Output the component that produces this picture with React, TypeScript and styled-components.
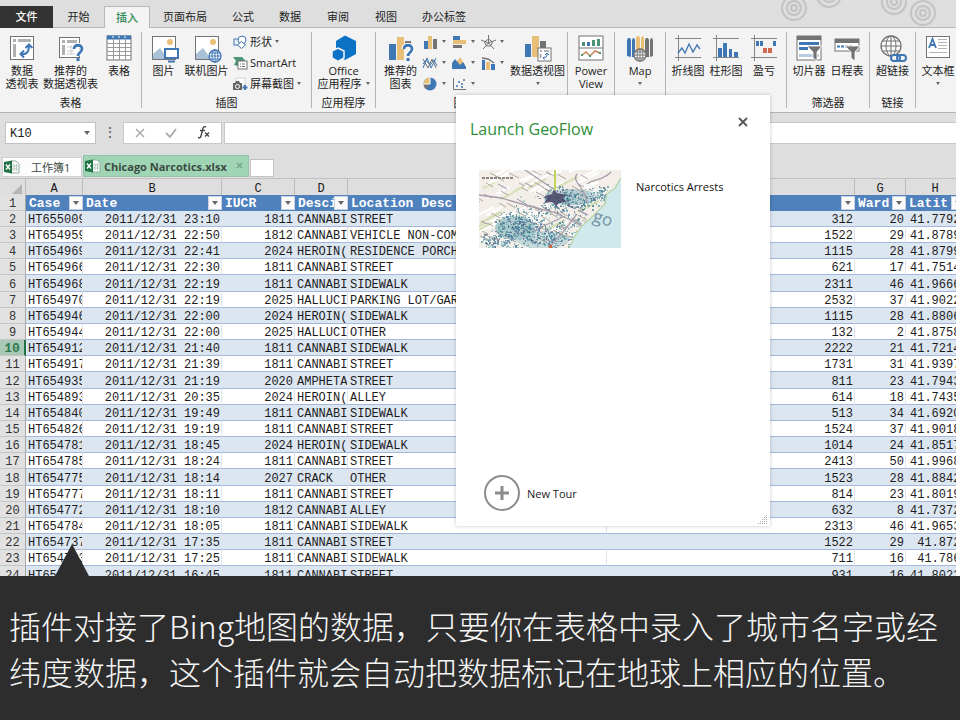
import React from "react";
import styled, { createGlobalStyle } from "styled-components";

const UI_FONT = '"Open Sans", "Noto Sans CJK SC", sans-serif';
const GRID_FONT = '"Liberation Mono", "Noto Sans CJK SC", monospace';

const Blue = "#3f76b4";
const Sand = "#e8bf77";
const Gray = "#737373";

const GlobalStyle = createGlobalStyle`
  * { box-sizing: border-box; }
  body { margin: 0; background: #fff; font-family: ${UI_FONT}; color: #222; }
  button, input { font: inherit; color: inherit; }
  button { border: 0; padding: 0; background: none; }
`;

const Page = styled.div`
  position: relative;
  display: flex;
  flex-direction: column;
  height: 100vh;
  overflow: hidden;
`;

const Workbook = styled.main`
  display: flex;
  flex-direction: column;
  flex: 1;
  min-height: 0;
  margin-right: 4px;
  overflow: hidden;
  background: #dedede;
`;

/* ---------- ribbon tabs ---------- */

const TabStrip = styled.nav`
  position: relative;
  display: flex;
  flex: none;
  height: 28px;
  padding-top: 6px;
  border-bottom: 1px solid #b8b8b8;
`;

const RibbonTab = styled.button<{ $w: number; $kind?: "file" | "active" }>`
  width: ${(p) => p.$w}px;
  height: 22px;
  font-size: 11px;
  line-height: 20px;
  white-space: nowrap;
  color: ${(p) => (p.$kind === "file" ? "#fff" : p.$kind === "active" ? "#2f8a57" : "#222")};
  font-weight: ${(p) => (p.$kind ? 500 : 400)};
  background: ${(p) => (p.$kind === "file" ? "#333" : p.$kind === "active" ? "#f3f3f3" : "none")};
  border: ${(p) => (p.$kind === "active" ? "1px solid #b8b8b8" : "0")};
  border-bottom: 0;
`;

const Backdrop = styled.svg`
  position: absolute;
  top: 0;
  right: 0;
  pointer-events: none;
`;

/* ---------- ribbon ---------- */

const RibbonBar = styled.section`
  display: flex;
  flex: none;
  height: 85px;
  padding: 4px 0;
  overflow: hidden;
  background: #f3f3f3;
  border-bottom: 1px solid #b3b3b3;
`;

const Group = styled.div<{ $w: number; $last?: boolean }>`
  display: flex;
  flex-direction: column;
  flex: 0 0 ${(p) => p.$w}px;
  border-right: ${(p) => (p.$last ? "0" : "1px solid #b5b5b5")};
`;

const GroupBody = styled.div`
  display: flex;
  flex: 1;
  min-height: 0;
  justify-content: center;
`;

const GroupLabel = styled.div<{ $launcher?: boolean }>`
  height: 12px;
  padding-right: ${(p) => (p.$launcher ? 14 : 0)}px;
  font-size: 11px;
  line-height: 14px;
  text-align: center;
`;

const BigButton = styled.button<{ $w: number }>`
  display: flex;
  flex-direction: column;
  align-items: center;
  width: ${(p) => p.$w}px;
  padding-top: 2px;
  font-size: 11px;
  line-height: 13px;
  white-space: nowrap;
`;

const BigLabel = styled.span`
  display: flex;
  flex-direction: column;
  align-items: center;
  margin-top: 2px;
`;

const LabelLine = styled.span`
  display: flex;
  align-items: center;
  gap: 4px;
  min-height: 13px;
`;

const Arrow = styled.span<{ $size?: number }>`
  width: 0;
  height: 0;
  flex: none;
  border: ${(p) => p.$size ?? 2}px solid transparent;
  border-top: ${(p) => (p.$size ?? 2) + 1}px solid #666;
  border-bottom: 0;
`;

const SmallColumn = styled.div`
  display: flex;
  flex-direction: column;
  width: 78px;
  margin-left: 5px;
`;

const SmallButton = styled.button`
  display: flex;
  align-items: center;
  gap: 3px;
  height: 21px;
  padding-bottom: 2px;
  font-size: 11px;
  line-height: 14px;
  white-space: nowrap;
`;

const ChartGrid = styled.div`
  display: grid;
  grid-template-columns: repeat(3, 29px);
  grid-auto-rows: 21px;
  width: 88px;
`;

const ChartButton = styled.button`
  display: flex;
  align-items: center;
  gap: 5px;
  padding-bottom: 2px;
`;

/* ---------- formula bar ---------- */

const FormulaRow = styled.section`
  display: flex;
  flex: none;
  height: 43px;
  padding: 9px 0 12px 5px;
`;

const NameBox = styled.div`
  display: flex;
  align-items: center;
  width: 91px;
  padding-right: 5px;
  background: #fff;
  border: 1px solid #c2c2c2;
`;

const NameInput = styled.input`
  flex: 1;
  min-width: 0;
  padding: 2px 4px 0;
  border: 0;
  outline: 0;
  background: none;
  font-family: ${GRID_FONT};
  font-size: 12px;
`;

const Grip = styled.span`
  width: 27px;
  text-align: center;
  font-size: 14px;
  line-height: 20px;
  color: #555;
`;

const FormulaTools = styled.div`
  display: flex;
  align-items: center;
  justify-content: space-around;
  width: 99px;
  background: #fff;
  border: 1px solid #c8c8c8;
`;

const FormulaInput = styled.input`
  flex: 1;
  min-width: 0;
  margin-left: 2px;
  background: #fff;
  border: 1px solid #c8c8c8;
  border-right: 0;
  outline: 0;
`;

/* ---------- workbook tabs ---------- */

const BookTabs = styled.nav`
  display: flex;
  align-items: flex-end;
  flex: none;
  height: 23px;
  padding: 0 0 1px 2px;
  border-bottom: 1px solid #c0c0c0;
`;

const BookTab = styled.button<{ $w: number; $active?: boolean }>`
  display: flex;
  align-items: center;
  gap: ${(p) => (p.$active ? 3 : 11)}px;
  width: ${(p) => p.$w}px;
  height: ${(p) => (p.$active ? 22 : 20)}px;
  margin-right: 1px;
  padding: 0 3px 0 1px;
  font-size: 11px;
  font-weight: ${(p) => (p.$active ? 700 : 400)};
  white-space: nowrap;
  color: #3a4a40;
  background: ${(p) => (p.$active ? "#9fd5b4" : "#fdfdfd")};
  border: 1px solid ${(p) => (p.$active ? "#94c4a7" : "#d0d0d0")};
`;

const NewTab = styled.button`
  width: 24px;
  height: 18px;
  background: #fff;
  border: 1px solid #c4c4c4;
`;

/* ---------- sheet ---------- */

const SheetArea = styled.section`
  flex: 1;
  min-height: 0;
  overflow: hidden;
`;

const Sheet = styled.table`
  width: calc(100% + 9px);
  table-layout: fixed;
  border-collapse: separate;
  border-spacing: 0;
  font-family: ${GRID_FONT};
  font-size: 12px;
  line-height: 12px;
  color: #1c1c1c;
`;

const Col = styled.col<{ $w?: number }>`
  width: ${(p) => (p.$w ? `${p.$w}px` : "auto")};
`;

const Letter = styled.th`
  height: 16px;
  padding: 3px 0 0;
  font-weight: 400;
  background: #dedede;
  border-right: 1px solid #bdbdbd;
`;

const RowNumber = styled.th<{ $on?: boolean }>`
  height: 16px;
  padding: 3px 0 0;
  overflow: hidden;
  font-size: ${(p) => (p.$on ? 13 : 12)}px;
  font-weight: ${(p) => (p.$on ? 700 : 400)};
  color: ${(p) => (p.$on ? "#2d7a4d" : "#333")};
  background: ${(p) => (p.$on ? "#a9c8b5" : "#e1e1e1")};
  border-right: ${(p) => (p.$on ? "2px solid #217346" : "1px solid #a6a6a6")};
  border-bottom: 1px solid #c6c6c6;
`;

const FieldHead = styled.th`
  padding: 0;
  overflow: hidden;
  font-size: 13px;
  line-height: 16px;
  text-align: left;
  color: #fff;
  background: #4f81bd;
`;

const FieldInner = styled.div`
  display: flex;
  align-items: center;
  justify-content: space-between;
  height: 16px;
  padding-left: 3px;
`;

const FieldName = styled.span`
  flex: 1;
  min-width: 0;
  padding-top: 1px;
  overflow: hidden;
  white-space: nowrap;
`;

const FilterButton = styled.button`
  display: flex;
  align-items: center;
  justify-content: center;
  flex: none;
  width: 14px;
  height: 14px;
  background: #fafafa;
  border: 1px solid #c9d2de;
`;

const Row = styled.tr<{ $band: boolean }>`
  background: ${(p) => (p.$band ? "#dce6f1" : "#fff")};
  & > * { height: 16px; }
  &:nth-child(6n) > * { height: 17px; }
`;

const Cell = styled.td<{ $right?: boolean; $lat?: boolean }>`
  padding: 3px 1px 0 ${(p) => (p.$lat ? 4 : 2)}px;
  overflow: hidden;
  white-space: pre;
  text-align: ${(p) => (p.$right ? "right" : "left")};
  border-right: 1px solid #dfe5ef;
  border-bottom: 1px solid #a3b8da;
`;

const Corner = styled.svg`
  display: block;
  margin-left: auto;
  margin-right: 3px;
`;

/* ---------- launch dialog ---------- */

const Dialog = styled.section`
  position: absolute;
  top: 95px;
  left: 456px;
  display: flex;
  flex-direction: column;
  width: 314px;
  height: 431px;
  background: #fff;
  box-shadow: 0 0 4px rgba(0, 0, 0, 0.22);
`;

const DialogHead = styled.header`
  display: flex;
  align-items: flex-start;
  justify-content: space-between;
  padding: 21px 21px 0 14px;
`;

const DialogTitle = styled.h2`
  margin: 0;
  font-size: 16px;
  font-weight: 400;
  line-height: 27px;
  color: #2f8f37;
`;

const CloseButton = styled.button`
  height: 12px;
  line-height: 0;
`;

const TourItem = styled.button`
  display: flex;
  align-items: flex-start;
  gap: 15px;
  margin: 27px 0 0 23px;
  font-size: 11px;
  line-height: 34px;
  text-align: left;
  color: #111;
`;

const NewTour = styled.button`
  display: flex;
  align-items: center;
  gap: 7px;
  margin: auto auto 15px 28px;
  font-size: 11px;
  color: #222;
`;

const ResizeGrip = styled.svg`
  position: absolute;
  right: 2px;
  bottom: 2px;
`;

/* ---------- caption ---------- */

const Caption = styled.footer`
  position: relative;
  flex: none;
  padding: 26px 9px;
  background: #2d2d2d;
`;

const CaptionText = styled.p`
  margin: 0;
  font-family: "Noto Sans CJK SC", sans-serif;
  font-size: 32px;
  font-weight: 300;
  line-height: 46px;
  white-space: nowrap;
  color: #f6f6f6;
`;

const Pointer = styled.svg`
  position: absolute;
  left: 55px;
  bottom: 100%;
`;

/* ---------- icons ---------- */

const IconSvg = styled.svg`
  flex: none;
  overflow: visible;
`;

const Svg = ({ w = 28, h = 28, children }: { w?: number; h?: number; children: React.ReactNode }) => (
  <IconSvg width={w} height={h} viewBox={`0 0 ${w} ${h}`} fill="none" aria-hidden="true">
    {children}
  </IconSvg>
);

const PivotIcon = () => (
  <Svg>
    <rect x="2.500" y="2.500" width="23" height="23" fill="#fff" stroke={Gray} />
    <path d="M5 5h3v3H5zM10 5h13v3H10zM5 10h3v13H5z" fill="#b0b0b0" />
    <path d="M13 20c6 1 8-3 8-8M17.500 14l3.500-3.500 3.500 3.500M16 16.500L12.500 20l3.500 3.500" stroke={Blue} strokeWidth="2" />
  </Svg>
);

const QuestionMark = () => (
  <g>
    <path d="M17 15c0-5 8-5 8 0 0 3.500-4 3.500-4 7" stroke="#fff" strokeWidth="5" />
    <path d="M17 15c0-5 8-5 8 0 0 3.500-4 3.500-4 7" stroke={Blue} strokeWidth="2.800" />
    <rect x="19.500" y="24" width="3" height="3" fill={Blue} />
  </g>
);

const RecommendPivotIcon = () => (
  <Svg>
    <rect x="2.500" y="3.500" width="20" height="20" fill="#fff" stroke={Gray} />
    <path d="M5 6h3v3H5zM10 6h10v3H10zM5 11h3v10H5z" fill="#b0b0b0" />
    <path d="M10 13h9M10 17h7M10 20h8M14 11v10" stroke="#ccc" />
    <QuestionMark />
  </Svg>
);

const TableIcon = () => (
  <Svg>
    <rect x="2" y="2" width="24" height="24" fill="#fff" stroke={Gray} />
    <rect x="2" y="1.500" width="24" height="4" fill={Blue} />
    <path d="M2 9.500h24M2 13.500h24M2 17.500h24M2 21.500h24M8.500 5v21M14.500 5v21M20.500 5v21" stroke="#9a9a9a" />
    <path d="M7 3h2M13 3h2M19 3h2" stroke="#fff" />
  </Svg>
);

const PhotoBase = () => (
  <g>
    <rect x="2.500" y="2.500" width="23" height="23" fill="#fff" stroke={Gray} />
    <circle cx="20" cy="8" r="3" fill={Sand} />
    <path d="M3 25V20l7-6 8 11z" fill="#aac0d6" />
  </g>
);

const PictureIcon = () => (
  <Svg>
    <PhotoBase />
    <rect x="15" y="15" width="13" height="9" fill="#fff" stroke={Blue} strokeWidth="2" />
    <path d="M18 27.500h7" stroke={Blue} strokeWidth="2" />
  </Svg>
);

const Globe = ({ cx, cy, r, color, fill = "#fff" }: { cx: number; cy: number; r: number; color: string; fill?: string }) => (
  <g stroke={color}>
    <circle cx={cx} cy={cy} r={r} fill={fill} strokeWidth="1.300" />
    <ellipse cx={cx} cy={cy} rx={r * 0.5} ry={r} />
    <path d={`M${cx - r} ${cy}h${2 * r}M${cx} ${cy - r}v${2 * r}M${cx - r * 0.85} ${cy - r / 2}h${r * 1.7}M${cx - r * 0.85} ${cy + r / 2}h${r * 1.7}`} />
  </g>
);

const OnlinePictureIcon = () => (
  <Svg>
    <PhotoBase />
    <Globe cx={22} cy={22} r={6} color={Blue} />
  </Svg>
);

const ShapesIcon = () => (
  <Svg w={14} h={14}>
    <rect x="1" y="4" width="7" height="6" stroke={Blue} />
    <circle cx="9" cy="5" r="4" fill="#fff" stroke={Blue} />
    <path d="M8.500 6.500l4 3.500-4 3.500-4-3.500z" fill="#fff" stroke={Blue} />
  </Svg>
);

const SmartArtIcon = () => (
  <Svg w={14} h={14}>
    <path d="M0 1h9l3 3-2 3H5v3l-4-1 2-4z" fill="#4c9473" />
    <rect x="5" y="5" width="9" height="8" fill="#fff" stroke={Gray} />
    <path d="M7 8h1M7 10.500h1M9 8h3M9 10.500h3" stroke={Gray} />
  </Svg>
);

const ScreenshotIcon = () => (
  <Svg w={14} h={14}>
    <path d="M3 1h9v8H3z" fill="#fff" stroke="#d2d2d2" />
    <path d="M0 6h2l1-2h3l1 2h2v7H0z" fill="#666" />
    <circle cx="4.500" cy="9.500" r="2" fill="#666" stroke="#fff" />
    <path d="M12 8v5M9.500 10.500h5" stroke={Blue} strokeWidth="2" />
  </Svg>
);

const OfficeIcon = () => (
  <Svg>
    <path d="M15 1.500l11 5.500v13l-11 6-9-5V7z" fill="#0c72c6" />
    <path d="M8 14l6 3v7l-6 3.500L2 24v-7z" fill="#0c72c6" stroke="#f3f3f3" strokeWidth="1.500" />
  </Svg>
);

const RecommendChartIcon = () => (
  <Svg>
    <rect x="2" y="10" width="7" height="16" fill={Blue} />
    <rect x="10" y="3" width="7" height="23" fill={Sand} />
    <rect x="18" y="7" width="6" height="4" fill={Gray} />
    <QuestionMark />
  </Svg>
);

const PivotChartIcon = () => (
  <Svg>
    <rect x="1" y="10" width="6" height="13" fill={Blue} />
    <rect x="8" y="2" width="7" height="21" fill={Sand} />
    <rect x="16" y="7" width="6" height="8" fill={Gray} />
    <rect x="14" y="14" width="13" height="13" fill="#fff" stroke={Gray} />
    <path d="M16 17h2M20 17h5M16.500 20v4" stroke="#999" strokeWidth="1.500" />
    <path d="M19 24c3 0 4-1 4-4M21 21l2-2 2 2M20.500 22.500L19 24l1.500 1.500" stroke={Blue} />
  </Svg>
);

const ColumnGlyph = () => (
  <Svg w={14} h={14}>
    <path d="M1 6h4v8H1z" fill={Blue} />
    <path d="M5 1h4v13H5z" fill={Sand} />
    <path d="M10 4h4v10h-4z" fill={Gray} />
  </Svg>
);
const BarGlyph = () => (
  <Svg w={14} h={14}>
    <path d="M1 1h7v4H1z" fill={Blue} />
    <path d="M1 5h13v4H1z" fill={Sand} />
    <path d="M1 10h9v3H1z" fill={Gray} />
  </Svg>
);
const RadarGlyph = () => (
  <Svg w={14} h={14}>
    <path d="M7.500 0v8M0 5l7.500 3L15 5M2 14l5.500-6L13 14M7.500 4l4 3-2 4h-4l-2-4z" stroke={Gray} />
  </Svg>
);
const LineGlyph = () => (
  <Svg w={14} h={14}>
    <path d="M0 12L4 2l4 10 5-10" stroke={Blue} />
    <path d="M0 3l5 9 4-9 4 9" stroke={Gray} />
    <path d="M0 8l3-4 4 5 4-5 3 6" stroke={Blue} />
  </Svg>
);
const AreaGlyph = () => (
  <Svg w={14} h={14}>
    <path d="M2 10L8 1l5 8z" fill={Sand} />
    <path d="M0 13V7l3-4 5 6 3-3 3 5v2z" fill={Blue} />
  </Svg>
);
const ComboGlyph = () => (
  <Svg w={14} h={14}>
    <path d="M1 4h3v10H1z" fill={Blue} />
    <path d="M5 6h4v8H5z" fill={Sand} />
    <path d="M10 8h4v6h-4z" fill={Blue} />
    <path d="M1 2l6 1 6 4" stroke={Gray} strokeWidth="1.500" />
  </Svg>
);
const PieGlyph = () => (
  <Svg w={14} h={14}>
    <circle cx="7" cy="7" r="6.500" fill={Blue} />
    <path d="M7 7V0.500A6.500 6.500 0 0 0 0.500 7z" fill={Sand} />
    <path d="M7 7H0.500A6.500 6.500 0 0 0 3 12z" fill={Gray} />
    <path d="M7 0v7H0" stroke="#fff" />
  </Svg>
);
const ScatterGlyph = () => (
  <Svg w={14} h={14}>
    <path d="M1.500 1v11.500H14" stroke={Gray} />
    <path d="M4 9h2M6 5h2M9 7h2M11 3h2M9 10h2" stroke={Blue} strokeWidth="1.500" />
  </Svg>
);

const PowerViewIcon = () => (
  <Svg>
    <rect x="2" y="2" width="24" height="24" fill="#fff" stroke={Gray} />
    <path d="M2 14h24" stroke={Gray} />
    <path d="M5 8h3v4H5zM15 6h3v6h-3zM20 5h3v7h-3z" fill="#4c9473" />
    <path d="M10 8h3v4h-3z" fill={Blue} />
    <path d="M5 21l4-3 4 4 5-5 5 2" stroke="#c98552" strokeWidth="1.500" />
    <path d="M4 20h2v2H4zM12 21h2v2h-2zM22 18h2v2h-2z" fill="#4c9473" />
  </Svg>
);

const MapIcon = () => (
  <Svg>
    <path d="M1 6l1-2h2l1 2v17l-4-1z" fill={Blue} />
    <path d="M6 6l1-2h1l1 2v17H6z" fill={Blue} />
    <path d="M10 4l1-2h2l1 2v20h-4z" fill={Sand} />
    <path d="M15 4l1-2h1l1 2v20h-3z" fill={Sand} />
    <path d="M19 6l1-2h2l1 2v17h-4z" fill={Gray} />
    <path d="M24 6l1-2h1l1 2v16l-3 1z" fill={Gray} />
    <Globe cx={14} cy={21} r={6} color={Gray} />
  </Svg>
);

const SparkFrame = () => <path d="M4.500 1v26M1 4.500h26M1 23.500h26" stroke="#858585" />;

const SparkLineIcon = () => (
  <Svg>
    <SparkFrame />
    <path d="M4 19l4-5 3 5 4-9 4 8 4-7 3 4" stroke={Blue} strokeWidth="1.300" />
  </Svg>
);
const SparkColumnIcon = () => (
  <Svg>
    <SparkFrame />
    <path d="M6 14h4v9H6zM11 9h4v14h-4zM17 15h3v8h-3zM22 18h4v5h-4z" fill={Blue} />
  </Svg>
);
const WinLossIcon = () => (
  <Svg>
    <SparkFrame />
    <path d="M6 7h3v5H6zM10 7h3v5h-3zM23 7h3v5h-3z" fill={Blue} />
    <path d="M13 14h4v5h-4zM18 14h4v5h-4z" fill="#cf6a50" />
  </Svg>
);

const Funnel = () => (
  <path d="M12 12h15l-5 6v9l-4-3v-6z" fill={Gray} stroke="#fff" strokeWidth="0.800" />
);
const SlicerIcon = () => (
  <Svg>
    <rect x="2" y="2" width="24" height="24" fill="#fff" stroke={Gray} />
    <rect x="2" y="2" width="24" height="4" fill={Gray} />
    <path d="M4 9.500h20" stroke={Blue} strokeWidth="3" />
    <path d="M4 14.500h9" stroke={Blue} strokeWidth="3" />
    <path d="M4 21.500h20" stroke="#b9cbe0" strokeWidth="3" />
    <Funnel />
  </Svg>
);
const TimelineIcon = () => (
  <Svg>
    <rect x="2" y="5" width="24" height="12" fill="#fff" stroke={Gray} />
    <rect x="2" y="5" width="24" height="4" fill={Gray} />
    <path d="M4 12.500h16" stroke={Blue} strokeWidth="2" strokeDasharray="3 1" />
    <Funnel />
  </Svg>
);
const LinkIcon = () => (
  <Svg>
    <Globe cx={12} cy={12} r={10} color={Gray} fill="#fafafa" />
    <rect x="12" y="21" width="9" height="6" rx="3" fill="#f3f3f3" stroke={Blue} strokeWidth="2" />
    <rect x="18" y="21" width="9" height="6" rx="3" stroke={Blue} strokeWidth="2" />
  </Svg>
);
const TextBoxIcon = () => (
  <Svg>
    <rect x="2.500" y="2.500" width="23" height="21" fill="#fff" stroke={Gray} />
    <path d="M5 14l3.500-9 3.500 9M6 11h5" stroke={Blue} strokeWidth="1.800" />
    <path d="M14 5.500h9M14 8.500h9M14 11.500h9M14 14.500h9M5 18.500h18" stroke="#b4b4b4" />
  </Svg>
);

const BookIcon = () => (
  <Svg w={16} h={16}>
    <path d="M7 2h5l3 3v9H7z" fill="#fff" stroke="#8fae9b" />
    <path d="M10 5v7M12.500 5v7M8 7h6M8 10h6" stroke="#b7cbbd" />
    <path d="M0 3l8-1.500v13L0 13z" fill="#217346" />
    <path d="M2 5.500l4 5M6 5.500l-4 5" stroke="#fff" strokeWidth="1.400" />
  </Svg>
);

/* ---------- map thumbnail ---------- */

const makeRandom = (start: number) => {
  let seed = start;
  return () => {
    seed = (seed * 16807) % 2147483647;
    return seed / 2147483647;
  };
};

const random = makeRandom(4217);
const clusters = [
  { x: 38, y: 58, sx: 30, sy: 20, n: 420 },
  { x: 92, y: 28, sx: 36, sy: 14, n: 240 },
  { x: 122, y: 24, sx: 16, sy: 9, n: 70 },
  { x: 72, y: 66, sx: 34, sy: 16, n: 200 },
  { x: 14, y: 72, sx: 22, sy: 10, n: 90 },
  { x: 78, y: 46, sx: 50, sy: 22, n: 130 },
];
const teals = ["#3d8495", "#5d9ea8", "#86b9bd", "#4f7fa0", "#a9cdd0", "#56658c"];
const specks = clusters.flatMap((c) =>
  Array.from({ length: c.n }, () => ({
    x: Math.round(c.x + (random() + random() - 1) * c.sx),
    y: Math.round(c.y + (random() + random() - 1) * c.sy),
    w: 1 + Math.floor(random() * 2),
    h: 1 + Math.floor(random() * 2),
    fill: teals[Math.floor(random() * teals.length)],
  }))
);
const streets = Array.from({ length: 90 }, () => ({
  x: Math.round(random() * 110 - 6),
  y: Math.round(random() * 70),
  w: 5 + Math.round(random() * 5),
}));
const pale = Array.from({ length: 60 }, () => ({
  x: Math.round(random() * 120 - 10),
  y: Math.round(random() * 76),
  w: 8 + Math.round(random() * 14),
}));
const coast = "M142 8l-6 10-8 6-2 10-14 14-10 9-6 9-6 12";

const MapThumb = () => (
  <svg width="142" height="78" viewBox="0 0 142 78" role="img" aria-label="Narcotics Arrests">
    <rect width="142" height="78" fill="#f3efe8" />
    {pale.map((l, i) => (
      <path key={i} d={`M${l.x} ${l.y}l${l.w} ${-Math.round(l.w / 2)}`} stroke={i % 4 === 0 ? "#d5dfb4" : "#fff"} strokeWidth="2" />
    ))}
    <ellipse cx="36" cy="58" rx="20" ry="12" fill="#6ba5b0" opacity="0.500" />
    <ellipse cx="92" cy="27" rx="26" ry="8" fill="#7fa9b8" opacity="0.500" />
    <ellipse cx="64" cy="70" rx="26" ry="9" fill="#9cc3c9" opacity="0.500" />
    {streets.map((l, i) => (
      <path key={i} d={`M${l.x} ${l.y}l${l.w} ${Math.round(l.w / 2)}`} stroke={i % 5 === 0 ? "#8f86a0" : "#a59f98"} strokeWidth="0.900" />
    ))}
    {specks.map((s, i) => (
      <rect key={i} x={s.x} y={s.y} width={s.w} height={s.h} fill={s.fill} opacity="0.750" />
    ))}
    <path d="M0 25l22 3 28 8 24 6 22 10 8 4M70 78l14-16 14-18M46 0l30 20M98 4c-6 8 8 12 10 28M108 14c8-6 14-2 24-12M52 62l34-16" stroke="#a79cab" strokeWidth="1.300" fill="none" />
    <path d={`${coast}h56z`} fill="#cfe9ec" />
    <path d={coast} stroke="#bcd6b0" strokeWidth="1.500" fill="none" />
    <path d="M64 27l9-3 2-5 3 4 10 2-4 3 4 4-8 1-3 3-4-4-8 1 3-4z" fill="#454465" opacity="0.850" />
    <path d="M76 0v20" stroke="#bed35c" strokeWidth="2" />
    <path d="M3 8h32" stroke="#8b8583" strokeWidth="2" strokeDasharray="3 1" />
    <rect x="70" y="75" width="3" height="3" fill="#d0643f" />
    <text x="113" y="51" fontSize="17" fontFamily="Open Sans, sans-serif" fill="#7794a5" transform="rotate(18 113 51)">go</text>
  </svg>
);

/* ---------- data ---------- */

type Rec = [string, string, number, string, string, number, number, string];

const records: Rec[] = [
  ["HT655009", "23:10", 1811, "CANNABI", "STREET", 312, 20, "41.7792"],
  ["HT654959", "22:50", 1812, "CANNABI", "VEHICLE NON-COM", 1522, 29, "41.8789"],
  ["HT654969", "22:41", 2024, "HEROIN(", "RESIDENCE PORCH", 1115, 28, "41.8799"],
  ["HT654966", "22:30", 1811, "CANNABI", "STREET", 621, 17, "41.7514"],
  ["HT654968", "22:19", 1811, "CANNABI", "SIDEWALK", 2311, 46, "41.9666"],
  ["HT654970", "22:19", 2025, "HALLUCI", "PARKING LOT/GAR", 2532, 37, "41.9022"],
  ["HT654946", "22:00", 2024, "HEROIN(", "SIDEWALK", 1115, 28, "41.8806"],
  ["HT654944", "22:00", 2025, "HALLUCI", "OTHER", 132, 2, "41.8758"],
  ["HT654912", "21:40", 1811, "CANNABI", "SIDEWALK", 2222, 21, "41.7214"],
  ["HT654917", "21:39", 1811, "CANNABI", "STREET", 1731, 31, "41.9397"],
  ["HT654935", "21:19", 2020, "AMPHETA", "STREET", 811, 23, "41.7943"],
  ["HT654893", "20:35", 2024, "HEROIN(", "ALLEY", 614, 18, "41.7435"],
  ["HT654840", "19:49", 1811, "CANNABI", "SIDEWALK", 513, 34, "41.6920"],
  ["HT654826", "19:19", 1811, "CANNABI", "STREET", 1524, 37, "41.9018"],
  ["HT654781", "18:45", 2024, "HEROIN(", "SIDEWALK", 1014, 24, "41.8517"],
  ["HT654785", "18:24", 1811, "CANNABI", "STREET", 2413, 50, "41.9968"],
  ["HT654775", "18:14", 2027, "CRACK", "OTHER", 1523, 28, "41.8842"],
  ["HT654777", "18:11", 1811, "CANNABI", "STREET", 814, 23, "41.8019"],
  ["HT654772", "18:10", 1812, "CANNABI", "ALLEY", 632, 8, "41.7372"],
  ["HT654784", "18:05", 1811, "CANNABI", "SIDEWALK", 2313, 46, "41.9653"],
  ["HT654737", "17:35", 1811, "CANNABI", "STREET", 1522, 29, " 41.872"],
  ["HT654733", "17:25", 1811, "CANNABI", "SIDEWALK", 711, 16, " 41.786"],
  ["HT654720", "16:45", 1811, "CANNABI", "STREET", 931, 16, "41.8022"],
];

const columnWidths = [26, 57, 139, 73, 53, 259, 248, 51];
const letters = ["A", "B", "C", "D", "E", "F", "G", "H"];
const fields = ["Case", "Date", "IUCR", "Desci", "Location Desc", "", "Ward", "Latit"];

const ribbonTabs: { text: string; w: number; kind?: "file" | "active" }[] = [
  { text: "文件", w: 53, kind: "file" },
  { text: "开始", w: 51 },
  { text: "插入", w: 46, kind: "active" },
  { text: "页面布局", w: 70 },
  { text: "公式", w: 46 },
  { text: "数据", w: 48 },
  { text: "审阅", w: 48 },
  { text: "视图", w: 48 },
  { text: "办公标签", w: 68 },
];

const glyphs = [ColumnGlyph, BarGlyph, RadarGlyph, LineGlyph, AreaGlyph, ComboGlyph, PieGlyph, ScatterGlyph];
const glyphNames = ["柱形图", "条形图", "雷达图", "折线图", "面积图", "组合图", "饼图", "散点图"];

const Big = ({ w, icon, lines, arrow }: { w: number; icon: React.ReactNode; lines: string[]; arrow?: "inline" | "below" }) => (
  <BigButton $w={w}>
    {icon}
    <BigLabel>
      {lines.map((line, i) => (
        <LabelLine key={line}>
          {line}
          {arrow === "inline" && i === lines.length - 1 && <Arrow />}
        </LabelLine>
      ))}
      {arrow === "below" && (
        <LabelLine>
          <Arrow />
        </LabelLine>
      )}
    </BigLabel>
  </BigButton>
);

const ring = (cx: number, cy: number) => (
  <g key={`${cx}-${cy}`}>
    <circle cx={cx} cy={cy} r="12" />
    <circle cx={cx} cy={cy} r="7" />
    <circle cx={cx} cy={cy} r="3" />
  </g>
);

export default function App() {
  return (
    <Page>
      <GlobalStyle />
      <Workbook>
        <TabStrip>
          {ribbonTabs.map((t) => (
            <RibbonTab key={t.text} $w={t.w} $kind={t.kind}>
              {t.text}
            </RibbonTab>
          ))}
          <Backdrop width="180" height="27" fill="none" stroke="#c3c3c3" strokeWidth="2">
            {[ring(18, 8), ring(53, -5), ring(118, 2), ring(147, 13)]}
          </Backdrop>
        </TabStrip>

        <RibbonBar>
          <Group $w={142}>
            <GroupBody>
              <Big w={44} icon={<PivotIcon />} lines={["数据", "透视表"]} />
              <Big w={53} icon={<RecommendPivotIcon />} lines={["推荐的", "数据透视表"]} />
              <Big w={44} icon={<TableIcon />} lines={["表格"]} />
            </GroupBody>
            <GroupLabel>表格</GroupLabel>
          </Group>
          <Group $w={170}>
            <GroupBody>
              <Big w={43} icon={<PictureIcon />} lines={["图片"]} />
              <Big w={43} icon={<OnlinePictureIcon />} lines={["联机图片"]} />
              <SmallColumn>
                <SmallButton><ShapesIcon />形状<Arrow /></SmallButton>
                <SmallButton><SmartArtIcon />SmartArt</SmallButton>
                <SmallButton><ScreenshotIcon />屏幕截图<Arrow /></SmallButton>
              </SmallColumn>
            </GroupBody>
            <GroupLabel>插图</GroupLabel>
          </Group>
          <Group $w={64}>
            <GroupBody>
              <Big w={62} icon={<OfficeIcon />} lines={["Office", "应用程序"]} arrow="inline" />
            </GroupBody>
            <GroupLabel>应用程序</GroupLabel>
          </Group>
          <Group $w={192}>
            <GroupBody>
              <Big w={44} icon={<RecommendChartIcon />} lines={["推荐的", "图表"]} />
              <ChartGrid>
                {glyphs.map((Glyph, i) => (
                  <ChartButton key={glyphNames[i]} aria-label={glyphNames[i]}>
                    <Glyph />
                    <Arrow />
                  </ChartButton>
                ))}
              </ChartGrid>
              <Big w={54} icon={<PivotChartIcon />} lines={["数据透视图"]} arrow="below" />
            </GroupBody>
            <GroupLabel $launcher>图表</GroupLabel>
          </Group>
          <Group $w={47}>
            <GroupBody>
              <Big w={44} icon={<PowerViewIcon />} lines={["Power", "View"]} />
            </GroupBody>
          </Group>
          <Group $w={51}>
            <GroupBody>
              <Big w={44} icon={<MapIcon />} lines={["Map"]} arrow="below" />
            </GroupBody>
          </Group>
          <Group $w={121}>
            <GroupBody>
              <Big w={38} icon={<SparkLineIcon />} lines={["折线图"]} />
              <Big w={38} icon={<SparkColumnIcon />} lines={["柱形图"]} />
              <Big w={38} icon={<WinLossIcon />} lines={["盈亏"]} />
            </GroupBody>
          </Group>
          <Group $w={83}>
            <GroupBody>
              <Big w={38} icon={<SlicerIcon />} lines={["切片器"]} />
              <Big w={38} icon={<TimelineIcon />} lines={["日程表"]} />
            </GroupBody>
            <GroupLabel>筛选器</GroupLabel>
          </Group>
          <Group $w={46}>
            <GroupBody>
              <Big w={44} icon={<LinkIcon />} lines={["超链接"]} />
            </GroupBody>
            <GroupLabel>链接</GroupLabel>
          </Group>
          <Group $w={44} $last>
            <GroupBody>
              <Big w={44} icon={<TextBoxIcon />} lines={["文本框"]} arrow="below" />
            </GroupBody>
          </Group>
        </RibbonBar>

        <FormulaRow>
          <NameBox>
            <NameInput aria-label="名称框" defaultValue="K10" />
            <Arrow $size={3} />
          </NameBox>
          <Grip>⋮</Grip>
          <FormulaTools>
            <button aria-label="取消">
              <Svg w={12} h={12}><path d="M2 2l8 8M10 2l-8 8" stroke="#aaa" strokeWidth="1.500" /></Svg>
            </button>
            <button aria-label="输入">
              <Svg w={12} h={12}><path d="M1 6l4 4 6-8" stroke="#aaa" strokeWidth="1.800" /></Svg>
            </button>
            <button aria-label="插入函数">
              <Svg w={14} h={14}>
                <path d="M9 2c-2-1-3 0-3.500 3L4 11c-.500 2-1.500 2-3 1.500M3 5.500h5" stroke="#444" strokeWidth="1.400" />
                <path d="M8 7.500l4 4M12 7.500l-4 4" stroke="#444" strokeWidth="1.300" />
              </Svg>
            </button>
          </FormulaTools>
          <FormulaInput aria-label="编辑栏" />
        </FormulaRow>

        <BookTabs>
          <BookTab $w={80}><BookIcon />工作簿1</BookTab>
          <BookTab $w={166} $active>
            <BookIcon />
            Chicago Narcotics.xlsx
            <Svg w={14} h={10}><path d="M7 2l5 5M12 2L7 7" stroke="#78a289" strokeWidth="1.500" /></Svg>
          </BookTab>
          <NewTab aria-label="新标签" />
        </BookTabs>

        <SheetArea>
          <Sheet>
            <colgroup>
              {columnWidths.map((w, i) => (
                <Col key={i} $w={w} />
              ))}
              <Col />
            </colgroup>
            <thead>
              <tr>
                <Letter aria-label="全选">
                  <Corner width="10" height="10"><path d="M10 0v10H0z" fill="#b5b5b5" /></Corner>
                </Letter>
                {letters.map((l) => (
                  <Letter key={l}>{l}</Letter>
                ))}
              </tr>
            </thead>
            <tbody>
              <Row $band={false}>
                <RowNumber>1</RowNumber>
                {fields.map((f, i) => (
                  <FieldHead key={i}>
                    <FieldInner>
                      <FieldName>{f}</FieldName>
                      <FilterButton aria-label={`筛选 ${f}`}>
                        <Arrow $size={3} />
                      </FilterButton>
                    </FieldInner>
                  </FieldHead>
                ))}
              </Row>
              {records.map((r, i) => (
                <Row key={r[0]} $band={i % 2 === 0}>
                  <RowNumber $on={i === 8}>{i + 2}</RowNumber>
                  <Cell>{r[0]}</Cell>
                  <Cell $right>{`2011/12/31 ${r[1]}`}</Cell>
                  <Cell $right>{r[2]}</Cell>
                  <Cell>{r[3]}</Cell>
                  <Cell>{r[4]}</Cell>
                  <Cell $right>{r[5]}</Cell>
                  <Cell $right>{r[6]}</Cell>
                  <Cell $lat>{r[7]}</Cell>
                </Row>
              ))}
            </tbody>
          </Sheet>
        </SheetArea>
      </Workbook>

      <Dialog role="dialog" aria-label="Launch GeoFlow">
        <DialogHead>
          <DialogTitle>Launch GeoFlow</DialogTitle>
          <CloseButton aria-label="Close">
            <Svg w={12} h={12}><path d="M2 2l8 8M10 2l-8 8" stroke="#555" strokeWidth="1.800" /></Svg>
          </CloseButton>
        </DialogHead>
        <TourItem>
          <MapThumb />
          Narcotics Arrests
        </TourItem>
        <NewTour>
          <Svg w={36} h={36}>
            <circle cx="18" cy="18" r="17" stroke="#8c8c8c" strokeWidth="2" />
            <path d="M18 11v14M11 18h14" stroke="#8c8c8c" strokeWidth="3" />
          </Svg>
          New Tour
        </NewTour>
        <ResizeGrip width="10" height="10" stroke="#a8a8a8" strokeDasharray="1 1">
          <path d="M8 1.500h2M6 3.500h4M4 5.500h6M2 7.500h8M0 9.500h10" />
        </ResizeGrip>
      </Dialog>

      <Caption>
        <Pointer width="34" height="32"><path d="M17 0l17 32H0z" fill="#2d2d2d" /></Pointer>
        <CaptionText>
          插件对接了Bing地图的数据，只要你在表格中录入了城市名字或经
          <br />
          纬度数据，这个插件就会自动把数据标记在地球上相应的位置。
        </CaptionText>
      </Caption>
    </Page>
  );
}
